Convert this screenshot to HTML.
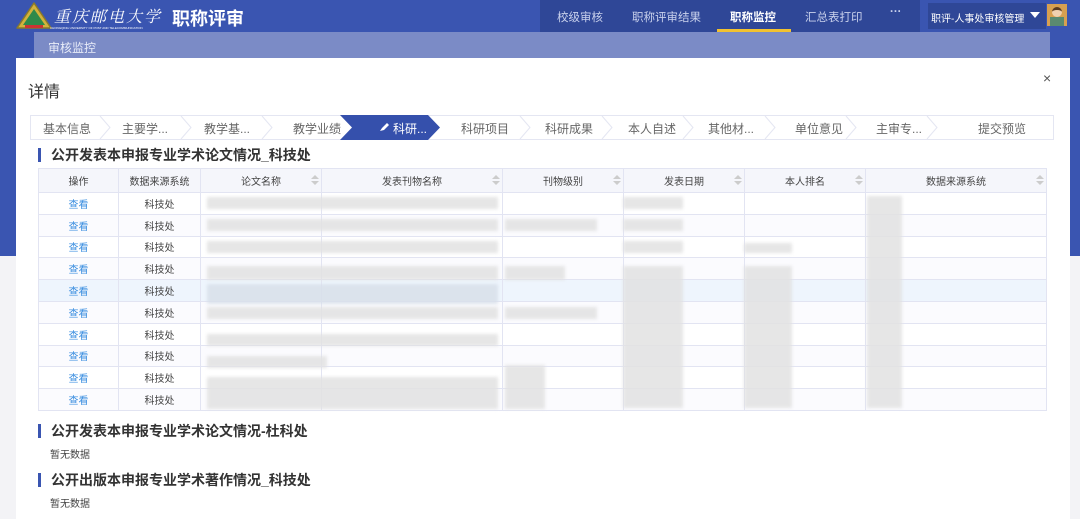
<!DOCTYPE html>
<html><head><meta charset="utf-8"><style>
*{margin:0;padding:0;box-sizing:border-box}
body{width:1080px;height:519px;overflow:hidden;background:#f3f3f6;font-family:"Liberation Sans","Noto Sans CJK SC",sans-serif;position:relative;color:#333}
.abs{position:absolute}
#top{left:0;top:0;width:1080px;height:256px;background:#3a55b1}
#nav{left:540px;top:0;width:380px;height:32px;background:#2f4797}
#nav2{left:928px;top:3px;width:118px;height:26px;background:#2f4797}
.ni{position:absolute;top:9px;font-size:11.5px;color:#c9d1ec;white-space:nowrap}
#sub{left:34px;top:32px;width:1016px;height:26px;background:#7b8bc6;color:#e8ecf8;font-size:12px;padding:7px 0 0 14px}
#modal{left:16px;top:58px;width:1054px;height:461px;background:#fff}
.step{position:absolute;top:120px;font-size:12px;color:#666;white-space:nowrap}
.sec{position:absolute;left:38px;font-size:14px;font-weight:bold;color:#333;padding-left:10px;border-left:3px solid #3a55b1;line-height:14px}
.nd{position:absolute;left:50px;font-size:10px;color:#444}
table{position:absolute;left:38px;top:168px;border-collapse:collapse;font-size:10px}
td,th{border:1px solid #e2e4f2;height:22px;text-align:center;font-weight:normal;color:#444;position:relative}
td{height:21.8px}
th{background:#f5f6fb;height:24px}
td.l{color:#3a8ee0}
tr.hl td{background:#eef5fd}
tr.alt td{background:#fbfbfe}
.srt{position:absolute;right:4px;top:6px;width:6px;height:12px}
.srt:before,.srt:after{content:"";position:absolute;left:0;border-left:4px solid transparent;border-right:4px solid transparent}
.srt:before{top:0;border-bottom:4px solid #ccc}
.srt:after{top:6px;border-top:4px solid #ccc}
.b{position:absolute;background:#e2e2e2;filter:blur(1.5px);opacity:.85}
</style></head><body>
<div id="top" class="abs"></div>
<svg class="abs" style="left:14px;top:1px" width="40" height="30" viewBox="0 0 40 30"><path d="M20 2 L37 27 L3 27 Z" fill="#d4b23c" stroke="#8a7a2a" stroke-width="1.5" stroke-linejoin="round"/><path d="M20 8 L31 24 L9 24 Z" fill="#2e8a4a"/><rect x="11" y="24" width="18" height="3" fill="#c33"/></svg>
<div class="abs" style="left:54px;top:4px;width:110px;overflow:hidden;white-space:nowrap;font-family:'Noto Serif CJK SC',serif;font-size:16px;font-style:italic;color:#fff;letter-spacing:2px">重庆邮电大学</div>
<div class="abs" style="left:50px;top:26px;width:110px;overflow:hidden;white-space:nowrap;font-size:3px;color:#fff">CHONGQING UNIVERSITY OF POST AND TELECOMMUNICATION</div>
<div class="abs" style="left:172px;top:5px;font-size:18px;font-weight:bold;color:#fff">职称评审</div>
<div id="nav" class="abs"></div>
<div class="ni" style="left:557px">校级审核</div>
<div class="ni" style="left:632px">职称评审结果</div>
<div class="ni" style="left:730px;color:#fff;font-weight:bold">职称监控</div>
<div class="abs" style="left:717px;top:29px;width:74px;height:3px;background:#f2c230"></div>
<div class="ni" style="left:805px">汇总表打印</div>
<div class="ni" style="left:890px;top:6px;font-weight:bold">···</div>
<div id="nav2" class="abs"></div>
<div class="ni" style="left:931px;font-size:10px;top:10px;color:#fff">职评-人事处审核管理</div>
<div class="abs" style="left:1030px;top:12px;border-left:5px solid transparent;border-right:5px solid transparent;border-top:6px solid #fff"></div>
<div class="abs" style="left:1047px;top:4px;width:20px;height:22px;background:#d8a050"><div style="position:absolute;left:5px;top:3px;width:10px;height:10px;border-radius:5px;background:#f0d0b0;border-top:3px solid #5a3a20"></div><div style="position:absolute;left:3px;top:13px;width:14px;height:9px;background:#5a8a70"></div></div>
<div id="sub" class="abs">审核监控</div>
<div id="modal" class="abs"></div>
<div class="abs" style="left:28px;top:78px;font-size:16px;color:#333">详情</div>
<div class="abs" style="left:1043px;top:70px;font-size:14px;color:#555">×</div>
<div class="abs" style="left:30px;top:115px;width:1024px;height:25px;border:1px solid #e4e6f2"></div>
<svg class="abs" style="left:30px;top:115px" width="1024" height="25">
<g fill="none" stroke="#e4e6f2">
<path d="M70 1 L80 12.5 L70 24"/><path d="M151 1 L161 12.5 L151 24"/><path d="M232 1 L242 12.5 L232 24"/><path d="M490 1 L500 12.5 L490 24"/><path d="M572 1 L582 12.5 L572 24"/><path d="M653 1 L663 12.5 L653 24"/><path d="M735 1 L745 12.5 L735 24"/><path d="M816 1 L826 12.5 L816 24"/><path d="M897 1 L907 12.5 L897 24"/></g>
<path d="M310 0 L398 0 L410 12.5 L398 25 L310 25 L322 12.5 Z" fill="#3550ac"/>
<path d="M350 16 L354 15 L359 10 L357 8 L352 13 Z" fill="#fff"/>
</svg>
<div class="step" style="left:43px">基本信息</div>
<div class="step" style="left:122px">主要学...</div>
<div class="step" style="left:204px">教学基...</div>
<div class="step" style="left:293px">教学业绩</div>
<div class="step" style="left:393px;color:#fff">科研...</div>
<div class="step" style="left:461px">科研项目</div>
<div class="step" style="left:545px">科研成果</div>
<div class="step" style="left:628px">本人自述</div>
<div class="step" style="left:708px">其他材...</div>
<div class="step" style="left:795px">单位意见</div>
<div class="step" style="left:876px">主审专...</div>
<div class="step" style="left:978px">提交预览</div>
<div class="sec" style="top:148px">公开发表本申报专业学术论文情况_科技处</div>
<table>
<tr><th style="width:80px">操作</th><th style="width:82px">数据来源系统</th><th style="width:121px">论文名称<span class="srt"></span></th><th style="width:181px">发表刊物名称<span class="srt"></span></th><th style="width:121px">刊物级别<span class="srt"></span></th><th style="width:121px">发表日期<span class="srt"></span></th><th style="width:121px">本人排名<span class="srt"></span></th><th style="width:181px">数据来源系统<span class="srt"></span></th></tr>
<tr><td class="l">查看</td><td>科技处</td><td></td><td></td><td></td><td></td><td></td><td></td></tr>
<tr class="alt"><td class="l">查看</td><td>科技处</td><td></td><td></td><td></td><td></td><td></td><td></td></tr>
<tr><td class="l">查看</td><td>科技处</td><td></td><td></td><td></td><td></td><td></td><td></td></tr>
<tr class="alt"><td class="l">查看</td><td>科技处</td><td></td><td></td><td></td><td></td><td></td><td></td></tr>
<tr class="hl"><td class="l">查看</td><td>科技处</td><td></td><td></td><td></td><td></td><td></td><td></td></tr>
<tr class="alt"><td class="l">查看</td><td>科技处</td><td></td><td></td><td></td><td></td><td></td><td></td></tr>
<tr><td class="l">查看</td><td>科技处</td><td></td><td></td><td></td><td></td><td></td><td></td></tr>
<tr class="alt"><td class="l">查看</td><td>科技处</td><td></td><td></td><td></td><td></td><td></td><td></td></tr>
<tr><td class="l">查看</td><td>科技处</td><td></td><td></td><td></td><td></td><td></td><td></td></tr>
<tr class="alt"><td class="l">查看</td><td>科技处</td><td></td><td></td><td></td><td></td><td></td><td></td></tr>
</table>
<div class="b" style="left:207px;top:197px;width:291px;height:12px"></div>
<div class="b" style="left:207px;top:219px;width:291px;height:12px"></div>
<div class="b" style="left:207px;top:241px;width:291px;height:12px"></div>
<div class="b" style="left:207px;top:266px;width:291px;height:14px"></div>
<div class="b" style="left:207px;top:284px;width:291px;height:20px;background:#d8e0ea"></div>
<div class="b" style="left:207px;top:307px;width:291px;height:12px"></div>
<div class="b" style="left:207px;top:334px;width:291px;height:12px"></div>
<div class="b" style="left:207px;top:356px;width:120px;height:12px"></div>
<div class="b" style="left:207px;top:377px;width:291px;height:32px"></div>
<div class="b" style="left:505px;top:219px;width:92px;height:12px"></div>
<div class="b" style="left:505px;top:266px;width:60px;height:14px"></div>
<div class="b" style="left:505px;top:307px;width:92px;height:12px"></div>
<div class="b" style="left:505px;top:365px;width:40px;height:44px"></div>
<div class="b" style="left:623px;top:197px;width:60px;height:12px"></div>
<div class="b" style="left:623px;top:219px;width:60px;height:12px"></div>
<div class="b" style="left:623px;top:241px;width:60px;height:12px"></div>
<div class="b" style="left:623px;top:266px;width:60px;height:142px"></div>
<div class="b" style="left:744px;top:243px;width:48px;height:10px"></div>
<div class="b" style="left:744px;top:266px;width:48px;height:142px"></div>
<div class="b" style="left:867px;top:196px;width:35px;height:212px"></div>
<div class="sec" style="top:424px">公开发表本申报专业学术论文情况-杜科处</div>
<div class="nd" style="top:446px">暂无数据</div>
<div class="sec" style="top:473px">公开出版本申报专业学术著作情况_科技处</div>
<div class="nd" style="top:495px">暂无数据</div>
</body></html>
